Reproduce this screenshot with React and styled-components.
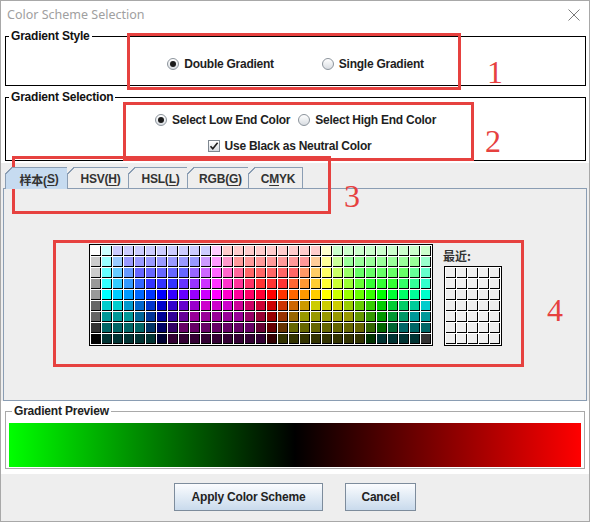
import React from "react";
import styled, { createGlobalStyle } from "styled-components";

const GlobalStyle = createGlobalStyle`
  html, body {
    margin: 0;
    padding: 0;
    background: #fff;
  }
  body {
    font-family: "Liberation Sans", Arial, sans-serif;
  }
  * {
    box-sizing: border-box;
  }
`;

// swatch table, every digit is a channel step of 51 (0..5)
const SWATCH_ROWS = [
  "555 455 445*9 545 544*9 554 454*9",
  "444 355 345 335*7 435 535 534 533*7 543 553 453 353*7 354",
  "444 255 245 235 225*5 325 425 525 524 523 522*5 532 542 552 452 352 252*5 253 254",
  "333 155 145 135 125 115*3 215 315 415 515 514 513 512 511*3 521 531 541 551 451 351 251 151*3 152 153 154",
  "333 055 045 035 025 015 005 105 205 305 405 505 504 503 502 501 500 510 520 530 540 550 450 350 250 150 050 051 052 053 054",
  "222 044 044 034 024 014 004 104 204 304 404 404 404 403 402 401 400 410 420 430 440 440 440 340 240 140 040 041 042 043 044",
  "222 033 033 033 023 013 003 103 203 303*5 302 301 300 310 320 330*5 230 130 030 031 032 033 033",
  "111 022*4 012 002 102 202*7 201 200 210 220*7 120 020 021 022*3",
  "000 011*5 001 101*9 100 110*8 010 011*4 111",
];

const swatchColors = SWATCH_ROWS.flatMap((row) =>
  row.split(" ").flatMap((tok) => {
    const [code, n] = tok.split("*");
    const c = `rgb(${code[0] * 51},${code[1] * 51},${code[2] * 51})`;
    return Array(Number(n || 1)).fill(c);
  })
);

const Window = styled.div`
  position: relative;
  width: 590px;
  height: 522px;
  border: 1px solid #a8a8a8;
  background: #eeeeee;
  display: flex;
  flex-direction: column;
  overflow: hidden;
`;

const TitleBar = styled.div`
  flex: none;
  height: 27px;
  background: #fff;
  display: flex;
  align-items: center;
  justify-content: space-between;
  padding: 0 9px 0 6px;
  font-family: "Noto Sans", sans-serif;
  font-size: 12.5px;
  color: #a0a0a0;
`;

const WhiteSection = styled.div`
  flex: none;
  background: #fff;
  padding: ${(p) => p.$pad};
`;

const Group = styled.fieldset`
  margin: ${(p) => p.$mt || 0}px 0 0;
  padding: ${(p) => p.$pad || "0"};
  min-width: 0;
  border: 1px solid ${(p) => p.$line || "#000"};
  display: flex;
  flex-direction: column;
  gap: ${(p) => p.$gap || 0}px;
`;

const Legend = styled.legend`
  margin-left: 3px;
  padding: 0 2px;
  font-size: 12px;
  line-height: 14px;
  font-weight: bold;
  letter-spacing: -0.2px;
  color: ${(p) => p.$color || "#111"};
`;

const Row = styled.div`
  display: flex;
  justify-content: center;
  align-items: center;
  gap: ${(p) => p.$gap}px;
  height: 16px;
  padding-right: ${(p) => p.$shift || 0}px;
`;

const Option = styled.label`
  display: flex;
  align-items: center;
  gap: 5px;
  font-size: 12px;
  font-weight: bold;
  letter-spacing: -0.25px;
  color: #1e1e1e;
  white-space: nowrap;
`;

const Radio = styled.span`
  position: relative;
  width: 12px;
  height: 12px;
  border-radius: 50%;
  border: 1px solid #8c949c;
  background: linear-gradient(#ffffff, #d9dde2);
  &::after {
    content: "";
    display: ${(p) => (p.$on ? "block" : "none")};
    position: absolute;
    left: 2px;
    top: 2px;
    width: 6px;
    height: 6px;
    border-radius: 50%;
    background: #1c1c1c;
  }
`;

const Check = styled.span`
  width: 12px;
  height: 12px;
  border: 1px solid #7f8891;
  background: linear-gradient(#ffffff, #d6dbe1);
  display: flex;
  align-items: center;
  justify-content: center;
`;

const TabsArea = styled.div`
  flex: none;
  padding: 4px 2px 0;
  background: #eeeeee;
`;

const TabRow = styled.div`
  position: relative;
  z-index: 1;
  display: flex;
  height: 22px;
  margin-bottom: -1px;
  padding-left: 2px;
`;

const Tab = styled.div`
  position: relative;
  width: ${(p) => p.$w}px;
  height: 22px;
  margin-left: ${(p) => (p.$first ? 0 : -1)}px;
  border: 1px solid #8a9db3;
  border-bottom: ${(p) => (p.$active ? "none" : "1px solid #8a9db3")};
  background: ${(p) => (p.$active ? "#c6dbf0" : "#eeeeee")};
  display: flex;
  align-items: center;
  justify-content: center;
  padding: 1px 0 0 5px;
  font-family: "Liberation Sans", "Noto Sans CJK SC", sans-serif;
  font-size: 12px;
  font-weight: bold;
  letter-spacing: -0.2px;
  color: #333;
  u {
    text-underline-offset: 2px;
  }
  &::before {
    content: "";
    position: absolute;
    top: -1px;
    left: -1px;
    width: 7px;
    height: 7px;
    background: linear-gradient(
      to bottom right,
      #eeeeee 44%,
      #8a9db3 44%,
      #8a9db3 58%,
      transparent 58%
    );
  }
`;

const TabBody = styled.div`
  height: 213px;
  border: 1px solid #8a9db3;
  background: #eeeeee;
  display: flex;
  align-items: flex-end;
  justify-content: center;
  gap: 11px;
  padding: 0 0 54px 1px;
`;

const SwatchGrid = styled.div`
  display: grid;
  grid-template-columns: repeat(${(p) => p.$cols}, 10px);
  grid-auto-rows: 10px;
  gap: 1px;
  padding: 1px;
  border: 1px solid #000;
  background: #fff;
`;

const Swatch = styled.span`
  background: ${(p) => p.$c};
  border-right: 1px solid #000;
  border-bottom: 1px solid #000;
`;

const RecentCol = styled.div`
  display: flex;
  flex-direction: column;
  align-items: flex-start;
`;

const RecentLabel = styled.div`
  font-family: "Noto Sans CJK SC", sans-serif;
  font-size: 12px;
  font-weight: bold;
  line-height: 16px;
  color: #333;
  margin: 0 0 2px -1px;
`;

const PreviewBar = styled.div`
  height: 44px;
  background: linear-gradient(to right, #00ff00 0%, #000000 50%, #ff0000 100%);
`;

const ButtonRow = styled.div`
  flex: 1;
  display: flex;
  justify-content: center;
  align-items: flex-start;
  gap: 22px;
  padding: 9px 0 0 0;
  background: #eeeeee;
`;

const Button = styled.button`
  width: ${(p) => p.$w}px;
  height: 28px;
  border: 1px solid #7d8c9c;
  background: linear-gradient(#fbfcfe, #e4edf6 45%, #c9daec);
  font-family: "Liberation Sans", Arial, sans-serif;
  font-size: 12px;
  font-weight: bold;
  letter-spacing: -0.2px;
  color: #222;
  padding: 0;
`;

const Mark = styled.div`
  position: absolute;
  left: ${(p) => p.$x}px;
  top: ${(p) => p.$y}px;
  width: ${(p) => p.$w}px;
  height: ${(p) => p.$h}px;
  border: 3px solid #e6413f;
  pointer-events: none;
`;

const MarkNum = styled.span`
  position: absolute;
  left: ${(p) => p.$x}px;
  top: ${(p) => p.$y}px;
  font-family: "Liberation Serif", serif;
  font-size: 32px;
  line-height: 32px;
  color: #e6413f;
`;

const tabs = [
  { w: 63, label: <>样本(<u>S</u>)</> },
  { w: 62, label: <>HSV(<u>H</u>)</> },
  { w: 60, label: <>HSL(<u>L</u>)</> },
  { w: 62, label: <>RGB(<u>G</u>)</> },
  { w: 55, label: <>C<u>M</u>YK</> },
];

const marks = [
  { x: 126, y: 32, w: 334, h: 57, n: "1", nx: 486, ny: 55 },
  { x: 122, y: 101, w: 351, h: 59, n: "2", nx: 484, ny: 124 },
  { x: 11, y: 155, w: 319, h: 58, n: "3", nx: 343, ny: 179 },
  { x: 52, y: 239, w: 471, h: 127, n: "4", nx: 546, ny: 293 },
];

export default function App() {
  return (
    <>
      <GlobalStyle />
      <Window>
        <TitleBar>
          <span>Color Scheme Selection</span>
          <svg width="12" height="12" viewBox="0 0 12 12">
            <path d="M0.5 0.5 L11.5 11.5 M11.5 0.5 L0.5 11.5" stroke="#7a7a7a" strokeWidth="1" />
          </svg>
        </TitleBar>

        <WhiteSection $pad="1px 3px 2px 4px">
          <Group $pad="13px 0 13px">
            <Legend>Gradient Style</Legend>
            <Row $gap={48}>
              <Option>
                <Radio $on />
                Double Gradient
              </Option>
              <Option>
                <Radio />
                Single Gradient
              </Option>
            </Row>
          </Group>

          <Group $mt={4} $pad="8px 0 6px" $gap={10}>
            <Legend>Gradient Selection</Legend>
            <Row $gap={8}>
              <Option>
                <Radio $on />
                Select Low End Color
              </Option>
              <Option>
                <Radio />
                Select High End Color
              </Option>
            </Row>
            <Row $gap={0} $shift={12}>
              <Option>
                <Check>
                  <svg width="10" height="10" viewBox="0 0 10 10">
                    <path d="M1.5 5.2 L3.8 7.8 L8.6 1.8" stroke="#1c1c1c" strokeWidth="1.6" fill="none" />
                  </svg>
                </Check>
                Use Black as Neutral Color
              </Option>
            </Row>
          </Group>
        </WhiteSection>

        <TabsArea>
          <TabRow>
            {tabs.map((t, i) => (
              <Tab key={i} $w={t.w} $first={i === 0} $active={i === 0}>
                {t.label}
              </Tab>
            ))}
          </TabRow>
          <TabBody>
            <SwatchGrid $cols={31}>
              {swatchColors.map((c, i) => (
                <Swatch key={i} $c={c} />
              ))}
            </SwatchGrid>
            <RecentCol>
              <RecentLabel>最近:</RecentLabel>
              <SwatchGrid $cols={5}>
                {Array.from({ length: 35 }, (_, i) => (
                  <Swatch key={i} $c="#eeeeee" />
                ))}
              </SwatchGrid>
            </RecentCol>
          </TabBody>
        </TabsArea>

        <WhiteSection $pad="3px 4px 5px 4px">
          <Group $line="#a9a9a9" $pad="5px 3px 1px">
            <Legend $color="#222">Gradient Preview</Legend>
            <PreviewBar />
          </Group>
        </WhiteSection>

        <ButtonRow>
          <Button $w={149}>Apply Color Scheme</Button>
          <Button $w={71}>Cancel</Button>
        </ButtonRow>

        {marks.map((m) => (
          <React.Fragment key={m.n}>
            <Mark $x={m.x} $y={m.y} $w={m.w} $h={m.h} />
            <MarkNum $x={m.nx} $y={m.ny}>{m.n}</MarkNum>
          </React.Fragment>
        ))}
      </Window>
    </>
  );
}
